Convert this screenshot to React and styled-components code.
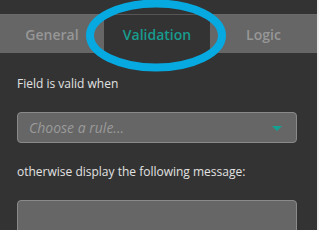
import React from "react";
import styled, { createGlobalStyle } from "styled-components";

const GlobalStyle = createGlobalStyle`
  html, body {
    margin: 0;
    padding: 0;
    background: #eeeeee;
  }
  body {
    font-family: "Open Sans", "Liberation Sans", sans-serif;
  }
`;

const Page = styled.div`
  display: flex;
  width: 319px;
  height: 230px;
  overflow: hidden;
`;

const Panel = styled.div`
  position: relative;
  width: 317px;
  height: 230px;
  background: #333333;
  padding-top: 14px;
  box-sizing: border-box;
`;

const Edge = styled.div`
  width: 2px;
  background: #eeeeee;
`;

const TabBar = styled.div`
  display: grid;
  grid-template-columns: 104px 106px 1fr;
  height: 39px;
`;

const Tab = styled.div`
  display: flex;
  align-items: center;
  justify-content: center;
  font-size: 14px;
  font-weight: 600;
  background: ${(p) => (p.$active ? "#333333" : "#666666")};
  color: ${(p) => (p.$active ? "#179c8e" : "#979797")};
  border-top: 1px solid ${(p) => (p.$active ? "#555555" : "#6a6a6a")};
  box-sizing: border-box;
`;

const Highlight = styled.svg`
  position: absolute;
  left: 84px;
  top: -2px;
  pointer-events: none;
`;

const Form = styled.div`
  display: flex;
  flex-direction: column;
  padding: 23px 20px 0 17px;
`;

const Label = styled.div`
  font-size: 12px;
  line-height: 16px;
  color: #e2e2e2;
`;

const Select = styled.div`
  display: flex;
  align-items: center;
  justify-content: space-between;
  height: 31px;
  margin: 20px 0 21px;
  padding: 0 14px 0 11px;
  background: #666666;
  border: 1px solid #8a8a8a;
  border-radius: 4px;
  box-sizing: border-box;
`;

const Placeholder = styled.span`
  font-size: 14px;
  font-style: italic;
  color: #9a9a9a;
`;

const Caret = styled.span`
  width: 0;
  height: 0;
  border-left: 5px solid transparent;
  border-right: 5px solid transparent;
  border-top: 5px solid #15a192;
  margin-top: 2px;
`;

const MessageBox = styled.div`
  height: 60px;
  margin-top: 20px;
  background: #666666;
  border: 1px solid #8a8a8a;
  border-radius: 4px;
`;

export default function App() {
  return (
    <Page>
      <GlobalStyle />
      <Panel>
        <TabBar>
          <Tab>General</Tab>
          <Tab $active>Validation</Tab>
          <Tab>Logic</Tab>
        </TabBar>
        <Form>
          <Label>Field is valid when</Label>
          <Select>
            <Placeholder>Choose a rule...</Placeholder>
            <Caret />
          </Select>
          <Label>otherwise display the following message:</Label>
          <MessageBox />
        </Form>
        <Highlight width="146" height="78" viewBox="0 0 146 78">
          <ellipse
            cx="72"
            cy="37.5"
            rx="66"
            ry="32"
            fill="none"
            stroke="#06a9e0"
            strokeWidth="8"
          />
        </Highlight>
      </Panel>
      <Edge />
    </Page>
  );
}
